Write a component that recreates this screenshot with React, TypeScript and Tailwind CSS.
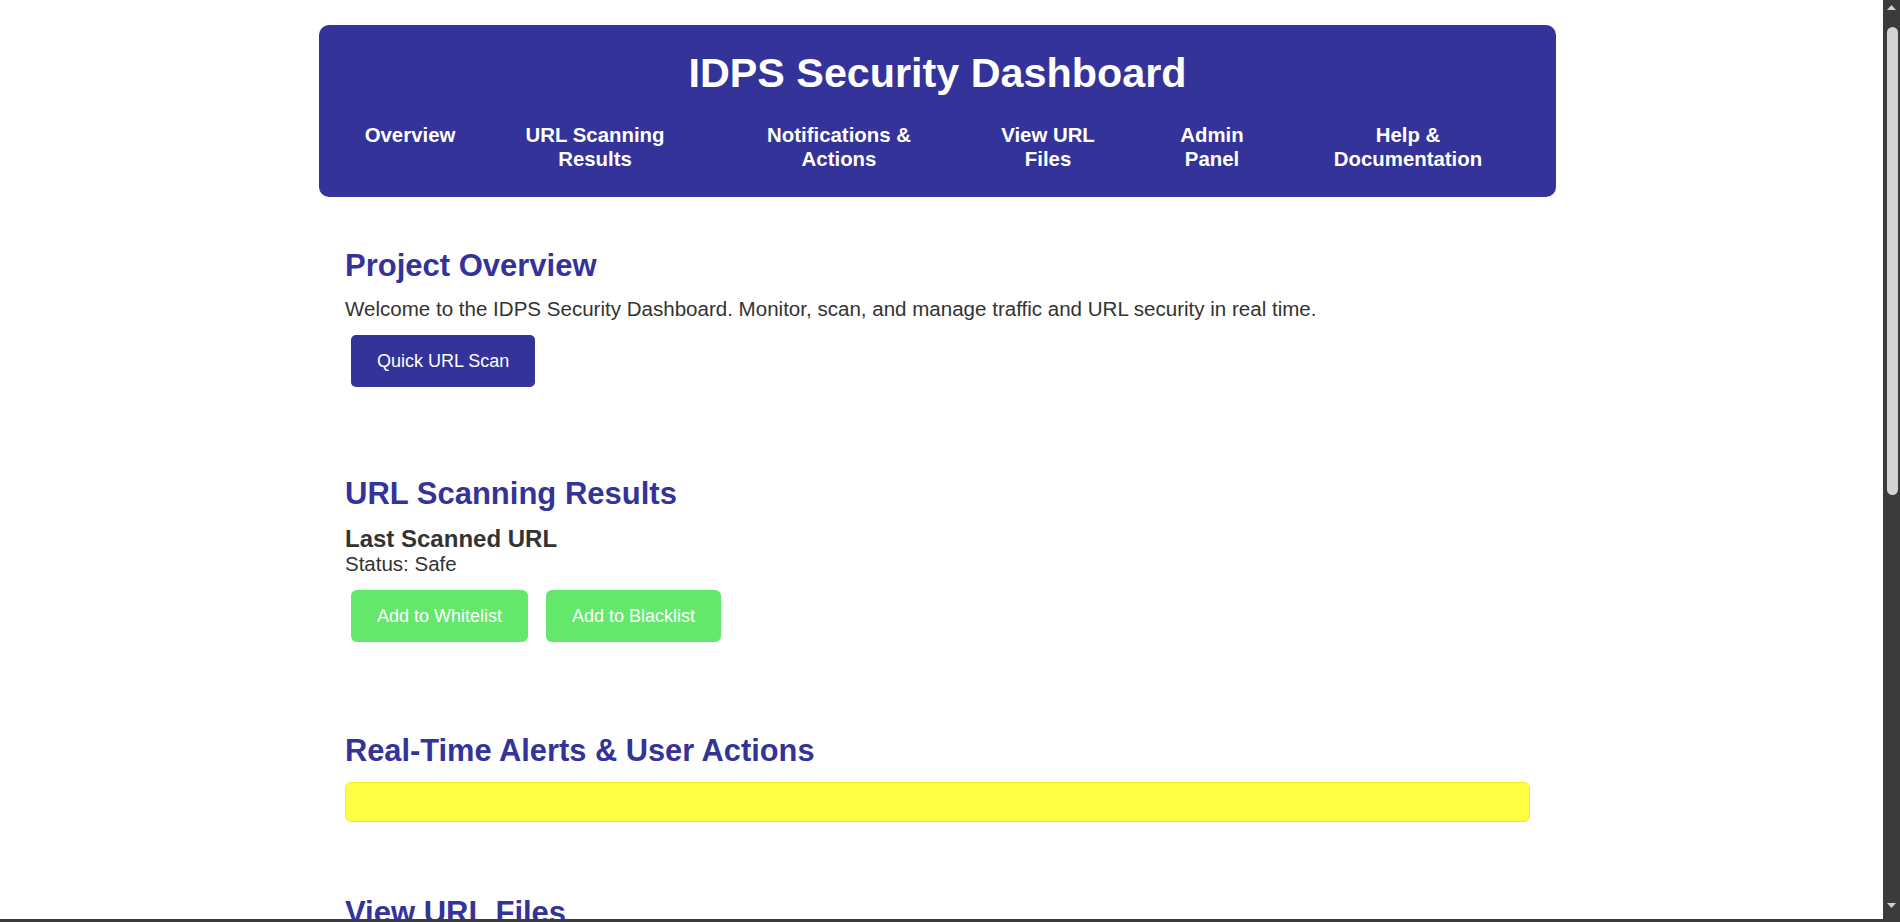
import React from "react";

const navItems: { lines: string[]; w: string }[] = [
  { lines: ["Overview"], w: "w-[102px]" },
  { lines: ["URL Scanning", "Results"], w: "w-[268px]" },
  { lines: ["Notifications &", "Actions"], w: "w-[220px]" },
  { lines: ["View URL", "Files"], w: "w-[198px]" },
  { lines: ["Admin", "Panel"], w: "w-[130px]" },
  { lines: ["Help &", "Documentation"], w: "w-[262px]" },
];

function Scrollbar() {
  return (
    <div className="flex w-[17px] shrink-0 flex-col items-center bg-[#3b3b3b]">
      <svg width="9" height="6" viewBox="0 0 9 6" className="mt-[5px]">
        <polygon points="4.5,0 9,5 0,5" fill="#cfcfcf" />
      </svg>
      <div className="mt-[16px] ml-[2px] h-[468px] w-[11px] rounded-full bg-[#d3d3d3]" />
      <div className="flex-1" />
      <svg width="9" height="6" viewBox="0 0 9 6" className="mb-[10px]">
        <polygon points="0,0 9,0 4.5,5" fill="#cfcfcf" />
      </svg>
    </div>
  );
}

export default function App() {
  return (
    <div className="flex h-screen flex-col overflow-hidden bg-white font-['Liberation_Sans',Arial,sans-serif] text-[#333333]">
      <div className="flex min-h-0 flex-1">
        <div className="min-w-0 flex-1 overflow-hidden">
          <div className="ml-[319px] w-[1237px] pt-[25px]">
            <header className="rounded-[10px] bg-[#333399] pt-[25px] pb-[26px] text-white">
              <h1 className="text-center text-[41.3px] font-bold leading-[46px]">
                IDPS Security Dashboard
              </h1>
              <nav className="mt-[27px] flex pl-[40px] text-[20.4px] font-bold leading-[24px]">
                {navItems.map((item) => (
                  <a key={item.lines.join(" ")} href="#" className={`${item.w} block text-center text-white`}>
                    {item.lines.map((l, i) => (
                      <span key={i} className="block">
                        {l}
                      </span>
                    ))}
                  </a>
                ))}
              </nav>
            </header>

            <main className="px-[26px] pb-[80px]">
              <section className="pt-[52px]">
                <h2 className="text-[31px] font-bold leading-[34px] text-[#333399]">Project Overview</h2>
                <p className="mt-[14px] text-[20.56px] leading-[24px]">
                  Welcome to the IDPS Security Dashboard. Monitor, scan, and manage traffic and URL security in real time.
                </p>
                <button className="mt-[14px] ml-[6px] flex h-[52px] items-center rounded-[5px] bg-[#333399] px-[26px] text-[18px] text-white">
                  Quick URL Scan
                </button>
              </section>

              <section className="mt-[90px]">
                <h2 className="text-[31px] font-bold leading-[34px] text-[#333399]">URL Scanning Results</h2>
                <h3 className="mt-[14px] text-[24px] font-bold leading-[27px]">Last Scanned URL</h3>
                <p className="text-[20.5px] leading-[24px]">Status: Safe</p>
                <div className="mt-[14px] ml-[6px] flex gap-[18px]">
                  <button className="flex h-[52px] items-center rounded-[6px] bg-[#63e86b] px-[26px] text-[18px] text-white">
                    Add to Whitelist
                  </button>
                  <button className="flex h-[52px] items-center rounded-[6px] bg-[#63e86b] px-[26px] text-[18px] text-white">
                    Add to Blacklist
                  </button>
                </div>
              </section>

              <section className="mt-[92px]">
                <h2 className="text-[30.8px] font-bold leading-[34px] text-[#333399]">Real-Time Alerts &amp; User Actions</h2>
                <div className="mt-[14px] h-[40px] rounded-[6px] border border-[#f5ea1c] bg-[#ffff44]" />
              </section>

              <section className="mt-[74px]">
                <h2 className="text-[31px] font-bold leading-[34px] text-[#333399]">View URL Files</h2>
                <p className="mt-[14px] text-[20.5px] leading-[24px]">Browse the scanned URL files and reports.</p>
              </section>

              <section className="mt-[91px]">
                <h2 className="text-[31px] font-bold leading-[34px] text-[#333399]">Admin Panel</h2>
                <p className="mt-[14px] text-[20.5px] leading-[24px]">Manage users, rules and system settings.</p>
              </section>

              <section className="mt-[91px]">
                <h2 className="text-[31px] font-bold leading-[34px] text-[#333399]">Help &amp; Documentation</h2>
                <p className="mt-[14px] text-[20.5px] leading-[24px]">Read the guides and frequently asked questions.</p>
              </section>
            </main>
          </div>
        </div>
        <Scrollbar />
      </div>
      <div className="h-[3px] shrink-0 bg-[#3b3b3b]" />
    </div>
  );
}
